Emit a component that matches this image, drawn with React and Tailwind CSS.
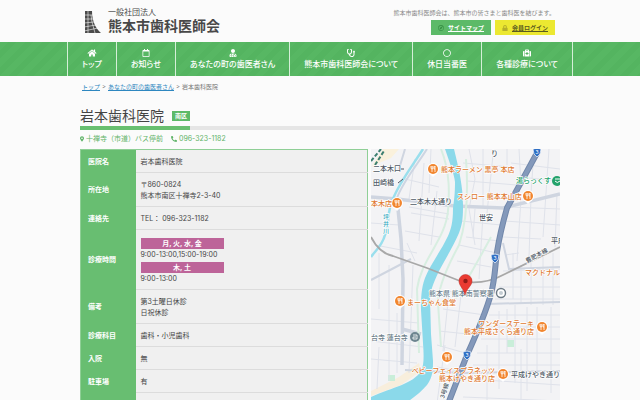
import {
  FaHome,
  FaRegCalendar,
  FaUserMd,
  FaStethoscope,
  FaRegCircle,
  FaMedkit,
  FaMapMarkerAlt,
  FaPhoneAlt,
  FaRegCompass,
  FaLock,
} from 'react-icons/fa';

const navItems = [
  { label: 'トップ', Icon: FaHome },
  { label: 'お知らせ', Icon: FaRegCalendar },
  { label: 'あなたの町の歯医者さん', Icon: FaUserMd },
  { label: '熊本市歯科医師会について', Icon: FaStethoscope },
  { label: '休日当番医', Icon: FaRegCircle },
  { label: '各種診療について', Icon: FaMedkit },
];

const rows = [
  { label: '医院名', lines: ['岩本歯科医院'] },
  { label: '所在地', lines: ['〒860-0824', '熊本市南区十禅寺2-3-40'] },
  { label: '連絡先', lines: ['TEL： 096-323-1182'] },
  {
    label: '診療時間',
    hours: [
      { days: '月, 火, 水, 金', time: '9:00-13:00,15:00-19:00' },
      { days: '木, 土', time: '9:00-13:00' },
    ],
  },
  { label: '備考', lines: ['第3土曜日休診', '日祝休診'] },
  { label: '診療科目', lines: ['歯科・小児歯科'] },
  { label: '入院', lines: ['無'] },
  { label: '駐車場', lines: ['有'] },
  { label: '', lines: ['\u00a0'] },
];

const shops = [
  { x: 62, y: 20 },
  { x: 26, y: 54 },
  { x: 157, y: 47 },
  { x: 29, y: 152 },
  { x: 171, y: 178 },
  { x: 76, y: 208 },
  { x: 132, y: 225 },
];

const RIVER =
  'M74 0C79 15 83 24 84 33C84 45 83 52 82 59C82 74 80 80 77 87C70 102 59 116 54 129C50 140 50 150 50 161L52 194C53 208 53 216 50 222C42 235 22 238 0 248V268H14C28 258 45 249 56 236C62 228 62 220 62 212L60 185L59 150C60 138 64 131 68 122C75 109 83 96 88 84C92 74 92 66 92 56C92 38 88 20 83 0Z';

const HIGHWAY = 'M166 4L136 59C130 80 128 90 126 103C124 118 124 130 120 145C114 166 106 184 96 206L72 268';

function Logo() {
  return (
    <svg viewBox="0 0 18 24" className="h-6 w-[18px]" aria-hidden="true">
      <path d="M1 1H8C8 10 11 18 17 23H1Z" fill="#4b4b4b" />
      <path
        d="M0 5H9M0 9H9M0 13L10 12M0 17L12 15M0 21L14 18M4 0V23M7 5L8 12M8 12L11 23"
        stroke="#fbfbfb"
        strokeWidth=".6"
        fill="none"
      />
    </svg>
  );
}

function ShopPin({ x, y }) {
  return (
    <g transform={`translate(${x} ${y})`}>
      <path d="M-4 4L0 8L4 4Z" fill="#fff" />
      <circle r="6" fill="#fff" />
      <circle r="5" fill="#f2862f" />
      <path d="M-2 -3V-1Q-2 0 -1 0V3M-1 -3V0M0 -3V-1Q0 0 -1 0M2 3V-3Q1 -2 1 0H2" stroke="#fff" strokeWidth=".8" fill="none" />
    </g>
  );
}

function RouteBadge({ x, y }) {
  return (
    <g transform={`translate(${x} ${y})`}>
      <path d="M-4 -3Q0 -5 4 -3Q4 3 0 5Q-4 3 -4 -3Z" fill="#2f6fc4" stroke="#fff" strokeWidth=".7" />
      <text y="2" fontSize="5" fill="#fff" textAnchor="middle">3</text>
    </g>
  );
}

function ClinicMap() {
  return (
    <svg viewBox="0 0 189 268" className="block w-full bg-[#f3f3f5]" role="img" aria-label="地図">
      {/* parks and blocks */}
      <path d="M0 18L12 0H28L20 9L8 14Z" fill="#faf1dc" />
      <path d="M0 242L28 228L48 214L50 222L30 236L0 247Z" fill="#f8eedc" />
      <path d="M136 191h7v7h-7zM17 226h7v6h-7z" fill="#c9eed9" />
      <path d="M0 12L10 0M4 16L13 2" stroke="#3d7f70" strokeWidth="2" strokeDasharray="4 2" />

      {/* small streets */}
      <g stroke="#dfe2ea" strokeWidth="1" fill="none">
        <path d="M34 30L68 38M40 64L78 70M34 82L68 88M44 10L38 50M53 14L48 92M66 42L60 96M0 74L28 76M4 96L46 104M36 94L44 112M8 104V160M18 116V232M0 170L48 174M0 192L52 198M26 164V224M42 116L38 224M0 210L46 214M8 198L6 240M38 58L78 65M60 0L58 44" />
        <path d="M98 0L104 30L98 60L104 96M112 0V58M122 6L116 64M136 0V16M92 14L140 18M96 32L146 36M90 72L130 76M95 88L128 92M104 60L102 88M112 66L108 130M88 96L126 104M86 112L120 118M76 142L118 148M72 160L114 166M68 182L106 186M78 142L72 202M90 146L84 198M66 196L98 205M66 218L88 222M74 196L66 254" />
        <path d="M148 0L150 36M162 16L160 44M178 0L172 88M140 14L189 20M148 28L189 32M138 58L189 60M134 72L189 76M132 88L170 90M150 50L146 112M160 48L158 108M186 44L184 98M134 106L148 104M142 104V150M132 122L189 120M128 138H189M124 150H189M150 116V154M160 114V156M172 108V156M182 104V156" />
        <path d="M118 166H189M114 178H189M110 190H189M106 204H189M102 216H189M98 230L189 236M92 248L189 252M128 162V240M144 156V234M156 158V242M166 158V226M180 158V244M136 160V204M150 200V252M116 196V256" />
      </g>
      {/* wide streets */}
      <g stroke="#cfd5e0" fill="none">
        <path d="M0 48L26 50L84 57L132 59L189 45" strokeWidth="3.5" />
        <path d="M26 50L30 90L32 130L31 216M31 180L50 185" strokeWidth="3.5" />
        <path d="M0 131L40 110M116 155L189 153M34 221L92 224L189 222" strokeWidth="2" />
        <path d="M34 0L28 20M132 94L138 120L189 118" strokeWidth="2" />
      </g>
      <path d="M70 0C80 25 78 48 77 62C74 92 50 110 46 140L48 204M95 10C98 50 94 78 88 96C75 120 67 142 67 154L70 198M120 88C108 110 95 134 84 150" stroke="#d8eee1" strokeWidth="2" fill="none" />

      {/* water */}
      <path d={RIVER} fill="#8bd9ea" />
      <path d="M52 0C42 16 28 34 22 50C15 64 19 76 14 86C11 97 4 102 0 108" stroke="#9adfed" strokeWidth="2.5" fill="none" />
      <path d="M56 0C46 16 31 34 26 49" stroke="#cdd5e2" strokeWidth="2" fill="none" />

      {/* railway and national road */}
      <path d="M0 88Q8 104 22 107L56 119L89 132Q112 137 134 125L189 98" stroke="#a8a8a8" strokeWidth="1.8" fill="none" />
      <path d={HIGHWAY} stroke="#7187aa" strokeWidth="6" fill="none" />
      <path d={HIGHWAY} stroke="#8499bb" strokeWidth="4" fill="none" />
      <RouteBadge x={166} y={3} />
      <RouteBadge x={124} y={109} />
      <RouteBadge x={96} y={206} />

      {shops.map((shop) => (
        <ShopPin key={`${shop.x}-${shop.y}`} x={shop.x} y={shop.y} />
      ))}
      <circle cx="186" cy="32" r="5" fill="#23a26b" />
      <path d="M184 30H189M184 32Q186 35 189 32" stroke="#fff" fill="none" />
      <circle cx="44" cy="188" r="5" fill="#6d8590" />
      <path d="M42 186H46V190H42V188H45" stroke="#fff" strokeWidth=".8" fill="none" />
      <circle cx="130" cy="144" r="4.5" fill="#fff" stroke="#6c7a85" strokeWidth="1.4" />
      <circle cx="130" cy="144" r="2" fill="#c3ccd3" />

      {/* labels */}
      <g fontSize="7" fontWeight="500" stroke="#fff" strokeWidth="1.4" strokeLinejoin="round" paintOrder="stroke">
        <g fill="#e0792f">
          <text x="70" y="23">熊本ラーメン 黒亭 本店</text>
          <text x="86" y="50">スシロー 熊本本山店</text>
          <text x="0" y="57">本木店</text>
          <text x="36" y="156">まーちゃん食堂</text>
          <text x="154" y="126">マクドナル</text>
          <text x="163" y="177" textAnchor="end">ワンダーステーキ</text>
          <text x="163" y="185" textAnchor="end">熊本平成さくら通り店</text>
          <text x="124" y="224" textAnchor="end">ベビーフェイスプラネッツ</text>
          <text x="124" y="232" textAnchor="end">熊本けやき通り店</text>
        </g>
        <g fill="#4f5965">
          <text x="2" y="22">二本木口</text>
          <text x="2" y="36">田崎橋</text>
          <text x="39" y="55">二本木大通り</text>
          <text x="108" y="71">世安</text>
          <text x="120" y="7">り</text>
          <text x="180" y="94">平成</text>
          <text x="140" y="228">平成けやき通り</text>
          <text x="0" y="191" fill="#6b7d88">台寺 蓮台寺</text>
          <text x="58" y="147" fill="#6c7f8e">熊本県 熊本南警察署</text>
          <text fontSize="6" transform="translate(156 114) rotate(-28)">豊肥本線</text>
          <text fontSize="6" transform="translate(73 250) rotate(-72)">3号線</text>
        </g>
        <text x="145" y="34" fill="#23a26b">湯らっくす</text>
        <g fontSize="6" fill="#35a8c0">
          <text x="12" y="70">坪</text>
          <text x="12" y="77">井</text>
          <text x="12" y="84">川</text>
        </g>
      </g>
      <path d="M30 20H33M27 34L32 30" stroke="#4f5965" />

      {/* clinic */}
      <path d="M94 146C93 140 88 137 88 132A6.500 6.500 0 0 1 101 132C101 137 95 140 94 146Z" fill="#ea3b32" stroke="#b8231c" strokeWidth=".5" />
      <circle cx="94.500" cy="132" r="2.200" fill="#8f1c17" />
    </svg>
  );
}

export default function App() {
  return (
    <div className="h-screen overflow-hidden bg-[#fbfbfb] font-['Inter','Noto_Sans_CJK_JP',sans-serif] text-[7px] leading-[11px] text-[#444]">
      {/* Header */}
      <header className="mx-auto flex h-[42px] max-w-[480px] items-start justify-between pl-1 pr-[5px] pt-2">
        <a href="#top" className="flex items-center gap-[6px] text-[#484848]">
          <Logo />
          <span className="flex flex-col">
            <span className="text-[8px] leading-[9px]">一般社団法人</span>
            <span className="text-[14px] font-bold leading-[18px]">熊本市歯科医師会</span>
          </span>
        </a>
        <div className="flex flex-col items-end gap-[3px]">
          <p className="text-[6px] leading-[9px] text-[#888]">熊本市歯科医師会は、熊本市の皆さまと歯科医を結びます。</p>
          <div className="flex gap-1 text-[6px] font-bold">
            <a href="#sitemap" className="flex h-[15px] w-[60px] items-center justify-center gap-1 bg-[#5cba68] text-white">
              <FaRegCompass className="text-[#348c42]" />
              <span className="underline">サイトマップ</span>
            </a>
            <a href="#login" className="flex h-[15px] w-[60px] items-center justify-center gap-1 bg-[#ece831] text-[#5a5a20]">
              <FaLock className="text-[#b5b02a]" />
              <span className="underline">会員ログイン</span>
            </a>
          </div>
        </div>
      </header>

      {/* Navigation */}
      <nav className="flex h-[34px] justify-center bg-[#55b561] bg-[repeating-linear-gradient(135deg,#57b763_0_6px,#54b460_6px_12px)] text-white">
        {navItems.map(({ label, Icon }) => (
          <a
            key={label}
            href="#nav"
            className="flex flex-col items-center justify-center gap-[2px] whitespace-nowrap border-l border-[#d5efd8] px-[14px] text-[8px] font-medium leading-[11px] [font-feature-settings:'palt'] last:border-r"
          >
            <Icon className="h-2 w-[10px]" />
            {label}
          </a>
        ))}
      </nav>

      <main className="mx-auto max-w-[480px]">
        <div className="flex gap-[2px] pl-[2px] pt-[5px] text-[6px] text-[#777]">
          <a href="#top" className="text-[#2e87c0] underline">トップ</a>
          <span>&gt;</span>
          <a href="#town" className="text-[#2e87c0] underline">あなたの町の歯医者さん</a>
          <span>&gt;</span>
          <span>岩本歯科医院</span>
        </div>

        {/* Title */}
        <div className="mt-[14px] flex border-b-4 border-[#e6e6e6]">
          <h1 className="-mb-1 flex items-center gap-2 border-b-4 border-[#68bf70] text-[14px] leading-5 text-[#444]">
            岩本歯科医院
            <span className="bg-[#5cba68] px-[3px] text-[6px] font-bold leading-[10px] text-white">南区</span>
          </h1>
        </div>
        <div className="mt-[3px] flex gap-2 text-[#5fb368]">
          <span className="flex items-center gap-[2px]">
            <FaMapMarkerAlt className="h-[6px] w-1" />
            十禅寺（市道）バス停前
          </span>
          <span className="flex items-center gap-[2px]">
            <FaPhoneAlt className="h-[6px] w-[6px]" />
            096-323-1182
          </span>
        </div>

        <div className="mt-[5px] flex items-start gap-[3px]">
          <table className="w-3/5 border-collapse border border-[#8fcf96] bg-[#f0f0f0] text-left">
            <tbody>
              {rows.map((row) => (
                <tr key={row.label}>
                  <th className="w-[55px] bg-[#68be71] pl-[7px] font-bold text-white">{row.label}</th>
                  <td className="border-b border-[#dcdcdc] pb-[5px] pl-[5px] pt-[6px]">
                    {row.lines?.map((line) => <p key={line}>{line}</p>)}
                    {row.hours?.map(({ days, time }) => (
                      <div key={days} className="w-[83px] whitespace-nowrap pt-[2px]">
                        <p className="bg-[#bd6499] text-center font-bold text-white">{days}</p>
                        <p>{time}</p>
                      </div>
                    ))}
                  </td>
                </tr>
              ))}
            </tbody>
          </table>
          <div className="min-w-0 flex-1">
            <ClinicMap />
          </div>
        </div>
      </main>
    </div>
  );
}
